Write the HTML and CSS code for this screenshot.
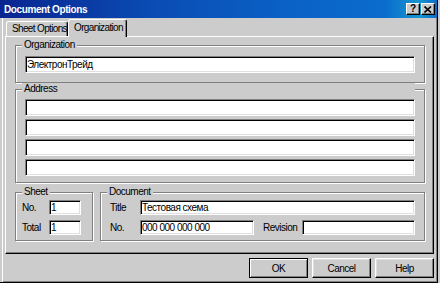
FILE: index.html
```html
<!DOCTYPE html>
<html lang="en">
<head>
    <meta charset="UTF-8">
    <title>Document Options</title>
    <link rel="stylesheet" href="styles.css">
</head>
<body>
    <div class="window">
        <div class="titlebar">
            <span class="title">Document Options</span>
            <div class="caption-btns">
                <button class="cap cap-help">?</button>
                <button class="cap">
                    <svg width="8" height="7" viewBox="0 0 8 7"><path d="M0.5 0.5 L7 6.5 M7 0.5 L0.5 6.5" stroke="#000" stroke-width="1.6"/></svg>
                </button>
            </div>
        </div>
        <div class="body">
            <div class="tabs">
                <div class="tab tab-sheet">Sheet Options</div>
                <div class="tab active">Organization</div>
            </div>
            <div class="panel">
                <!-- Organization -->
                <div class="group group-org">
                    <div class="legend">Organization</div>
                    <input type="text" class="field" value="ЭлектронТрейд">
                </div>
                <!-- Address -->
                <div class="group group-address">
                    <div class="legend">Address</div>
                    <input type="text" class="field">
                    <input type="text" class="field">
                    <input type="text" class="field">
                    <input type="text" class="field">
                </div>
                <div class="bottom-row">
                    <div class="group group-sheet">
                        <div class="legend">Sheet</div>
                        <div class="row">
                            <label class="lbl lbl-sheet">No.</label>
                            <input type="text" class="field small" value="1">
                        </div>
                        <div class="row">
                            <label class="lbl lbl-sheet">Total</label>
                            <input type="text" class="field small" value="1">
                        </div>
                    </div>
                    <div class="group group-doc">
                        <div class="legend">Document</div>
                        <div class="row">
                            <label class="lbl lbl-doc">Title</label>
                            <input type="text" class="field grow" value="Тестовая схема">
                        </div>
                        <div class="row">
                            <label class="lbl lbl-doc">No.</label>
                            <input type="text" class="field docno" value="000 000 000 000">
                            <label class="lbl lbl-rev">Revision</label>
                            <input type="text" class="field grow">
                        </div>
                    </div>
                </div>
            </div>
            <div class="buttons">
                <button class="btn default">OK</button>
                <button class="btn">Cancel</button>
                <button class="btn">Help</button>
            </div>
        </div>
    </div>
</body>
</html>
```

FILE: styles.css
```css
body {
    margin: 0;
    background: #cccccc;
    font-family: "Liberation Sans", Arial, sans-serif;
    font-size: 10px;
    letter-spacing: -0.5px;
    color: #000;
}
.window {
    width: 438px;
    height: 283px;
    box-sizing: border-box;
    background: #cccccc;
    border-right: 1px solid #000;
    border-bottom: 1px solid #000;
    box-shadow: inset 2px 0 0 #cccccc, inset 3px 0 0 #fff, inset -1px -1px 0 #808080;
}
.titlebar {
    height: 18px;
    display: flex;
    align-items: center;
    justify-content: space-between;
    padding: 0 2px 0 4px;
    background: linear-gradient(90deg, #0a2590 0%, #0a4cb4 35%, #0a64c8 70%, #0a6ccc 88%, #1896d0 96%, #0a6ccc 100%);
    color: #fff;
}
.title {
    font-weight: bold;
    font-size: 10px;
    letter-spacing: -0.4px;
}
.caption-btns {
    display: flex;
    gap: 1px;
}
.cap {
    width: 14px;
    height: 12px;
    padding: 0;
    margin: 0;
    box-sizing: border-box;
    background: #cccccc;
    border: 1px solid;
    border-color: #fff #000 #000 #fff;
    box-shadow: inset -1px -1px 0 #808080;
    display: flex;
    align-items: center;
    justify-content: center;
    font-family: "Liberation Sans", Arial, sans-serif;
    font-weight: bold;
    font-size: 10px;
    line-height: 10px;
    color: #000;
}
.body {
    padding: 1px 3px 0 5px;
}
.tabs {
    display: flex;
    align-items: flex-end;
    height: 17px;
    padding-left: 1px;
}
.tab {
    height: 15px;
    box-sizing: border-box;
    border: 1px solid #fff;
    border-bottom: none;
    border-right-color: #000;
    border-radius: 3px 3px 0 0;
    box-shadow: inset -1px 0 0 #808080;
    line-height: 14px;
    white-space: nowrap;
    letter-spacing: -0.65px;
    background: #cccccc;
}
.tab-sheet {
    width: 62px;
    padding: 0 0 0 5px;
}
.tab.active {
    position: relative;
    z-index: 1;
    width: 59px;
    height: 18px;
    margin-bottom: -1px;
    padding: 1px 0 0 5px;
}
.panel {
    height: 218px;
    box-sizing: border-box;
    border: 1px solid;
    border-color: #fff #000 #000 #fff;
    box-shadow: inset -1px -1px 0 #808080;
    padding: 8px 8px 0 9px;
}
.group {
    border: 1px solid #808080;
    box-shadow: inset 1px 1px 0 #fff, 1px 1px 0 #fff;
}
.legend {
    display: table;
    margin: -7px 0 0 -3px;
    padding: 0 2px;
    background: #cccccc;
    line-height: 12px;
}
.field {
    display: block;
    width: 100%;
    height: 17px;
    box-sizing: border-box;
    margin: 0;
    padding: 0 1px;
    border: 1px solid;
    border-color: #808080 #fff #fff #808080;
    box-shadow: inset 1px 1px 0 #000, inset -1px -1px 0 #dfdfdf;
    background: #fff;
    font-family: inherit;
    font-size: 10px;
    letter-spacing: -0.5px;
    color: #000;
    outline: none;
}
.group-org {
    padding: 0 9px 9px 9px;
}
.group-org .legend {
    margin-bottom: 5px;
}
.group-address {
    margin-top: 6px;
    padding: 0 9px 6px 9px;
    display: flex;
    flex-direction: column;
    gap: 3px;
}
.group-address .legend {
    margin-bottom: 1px;
}
.bottom-row {
    display: flex;
    gap: 7px;
    margin-top: 9px;
}
.row {
    display: flex;
    align-items: center;
    margin-top: 5px;
}
.legend + .row {
    margin-top: 2px;
}
.row .field {
    height: 15px;
}
.group-sheet {
    width: 78px;
    flex: none;
    box-sizing: border-box;
    padding: 0 6px 5px 6px;
}
.group-sheet .legend {
    margin-left: 0;
}
.group-doc {
    flex: 1;
    min-width: 0;
    padding: 0 9px 5px 9px;
}
.lbl {
    flex: none;
}
.lbl-sheet {
    width: 27px;
}
.lbl-doc {
    width: 30px;
}
.lbl-rev {
    width: 39px;
    margin-left: 9px;
}
.field.small {
    width: 32px;
    flex: none;
}
.field.docno {
    width: 114px;
    flex: none;
}
.field.grow {
    flex: 1;
    width: auto;
    min-width: 0;
}
.buttons {
    display: flex;
    justify-content: flex-end;
    gap: 4px;
    padding-top: 4px;
}
.btn {
    width: 59px;
    height: 20px;
    box-sizing: border-box;
    margin: 0;
    padding: 0;
    background: #cccccc;
    border: 1px solid;
    border-color: #fff #000 #000 #fff;
    box-shadow: inset -1px -1px 0 #808080, inset 1px 1px 0 #dfdfdf;
    font-family: inherit;
    font-size: 10px;
    letter-spacing: -0.5px;
    color: #000;
}
.btn.default {
    border-color: #000;
    box-shadow: inset 1px 1px 0 #fff, inset -1px -1px 0 #808080;
}
```
